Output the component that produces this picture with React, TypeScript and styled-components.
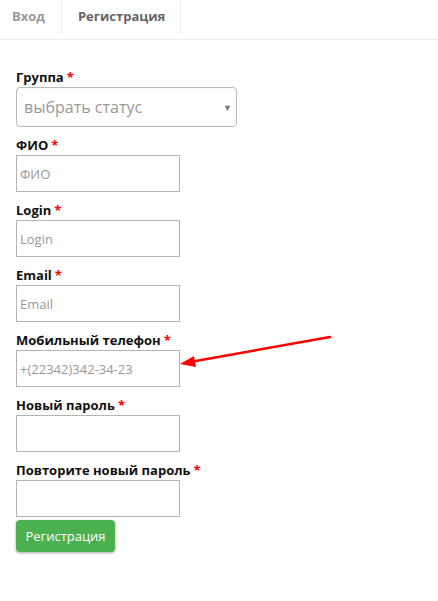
import React from 'react';
import styled, { createGlobalStyle } from 'styled-components';

const GlobalStyle = createGlobalStyle`
  html, body {
    margin: 0;
    padding: 0;
    background: #fff;
    font-family: 'Open Sans', 'Liberation Sans', sans-serif;
  }
`;

const Page = styled.div`
  position: relative;
  width: 438px;
  min-height: 601px;
`;

const Tabs = styled.div`
  display: flex;
  height: 39px;
  border-bottom: 1px solid #ececec;
`;

const Tab = styled.div<{ active?: boolean }>`
  box-sizing: border-box;
  height: 34px;
  padding: 7px ${({ active }) => (active ? '15px 0 16px' : '16px 0 12px')};
  border-right: 1px solid #eee;
  font-size: 13px;
  font-weight: 700;
  line-height: 18px;
  color: ${({ active }) => (active ? '#666' : '#999')};
`;

const Form = styled.form`
  display: flex;
  flex-direction: column;
  padding: 28px 16px 0;
`;

const Field = styled.div<{ last?: boolean }>`
  display: flex;
  flex-direction: column;
  margin-bottom: ${({ last }) => (last ? '3px' : '9px')};
`;

const Label = styled.label`
  font-size: 13px;
  font-weight: 700;
  line-height: 18px;
  color: #111;
  margin-bottom: 1px;
`;

const Star = styled.span`
  color: #f00;
  margin-left: 3px;
`;

const SelectBox = styled.div`
  box-sizing: border-box;
  display: flex;
  align-items: center;
  justify-content: space-between;
  width: 221px;
  height: 40px;
  padding: 0 4px 0 7px;
  border: 1px solid #bbb;
  border-radius: 4px;
  font-size: 16px;
  color: #999;
  box-shadow: inset 0 1px 2px rgba(0, 0, 0, 0.04);
`;

const Caret = styled.span`
  font-size: 9px;
  color: #777;
`;

const Input = styled.input`
  box-sizing: border-box;
  width: 164px;
  height: 37px;
  padding: 0 3px;
  border: 1px solid #b4b4b4;
  font-family: 'Open Sans', 'Liberation Sans', sans-serif;
  font-size: 13px;
  color: #333;
  outline: none;
  &::placeholder {
    color: #999;
  }
`;

const Button = styled.button`
  align-self: flex-start;
  width: 99px;
  height: 32px;
  border: none;
  border-radius: 4px;
  background: #4caf50;
  color: #fff;
  font-family: 'Open Sans', 'Liberation Sans', sans-serif;
  font-size: 13px;
  box-shadow: 0 1px 3px rgba(0, 0, 0, 0.35);
`;

const Arrow = styled.svg`
  position: absolute;
  left: 176px;
  top: 332px;
`;

const fields = [
  { label: 'ФИО', placeholder: 'ФИО' },
  { label: 'Login', placeholder: 'Login' },
  { label: 'Email', placeholder: 'Email' },
  { label: 'Мобильный телефон', placeholder: '+(22342)342-34-23' },
  { label: 'Новый пароль', placeholder: '', type: 'password' },
  { label: 'Повторите новый пароль', placeholder: '', type: 'password' },
];

const App: React.FC = () => {
  return (
    <Page>
      <GlobalStyle />
      <Tabs>
        <Tab>Вход</Tab>
        <Tab active>Регистрация</Tab>
      </Tabs>
      <Form onSubmit={(e) => e.preventDefault()}>
        <Field>
          <Label>
            Группа<Star>*</Star>
          </Label>
          <SelectBox>
            <span>выбрать статус</span>
            <Caret>▼</Caret>
          </SelectBox>
        </Field>
        {fields.map((f, i) => (
          <Field key={f.label} last={i === fields.length - 1}>
            <Label>
              {f.label}
              <Star>*</Star>
            </Label>
            <Input type={f.type || 'text'} placeholder={f.placeholder} />
          </Field>
        ))}
        <Button type="submit">Регистрация</Button>
      </Form>
      <Arrow width="160" height="40" viewBox="0 0 160 40">
        <line x1="154" y1="5" x2="14" y2="30" stroke="#f00" strokeWidth="2.5" strokeLinecap="round" />
        <polygon points="4,32 18,24 20,35" fill="#f00" />
      </Arrow>
    </Page>
  );
};

export default App;
